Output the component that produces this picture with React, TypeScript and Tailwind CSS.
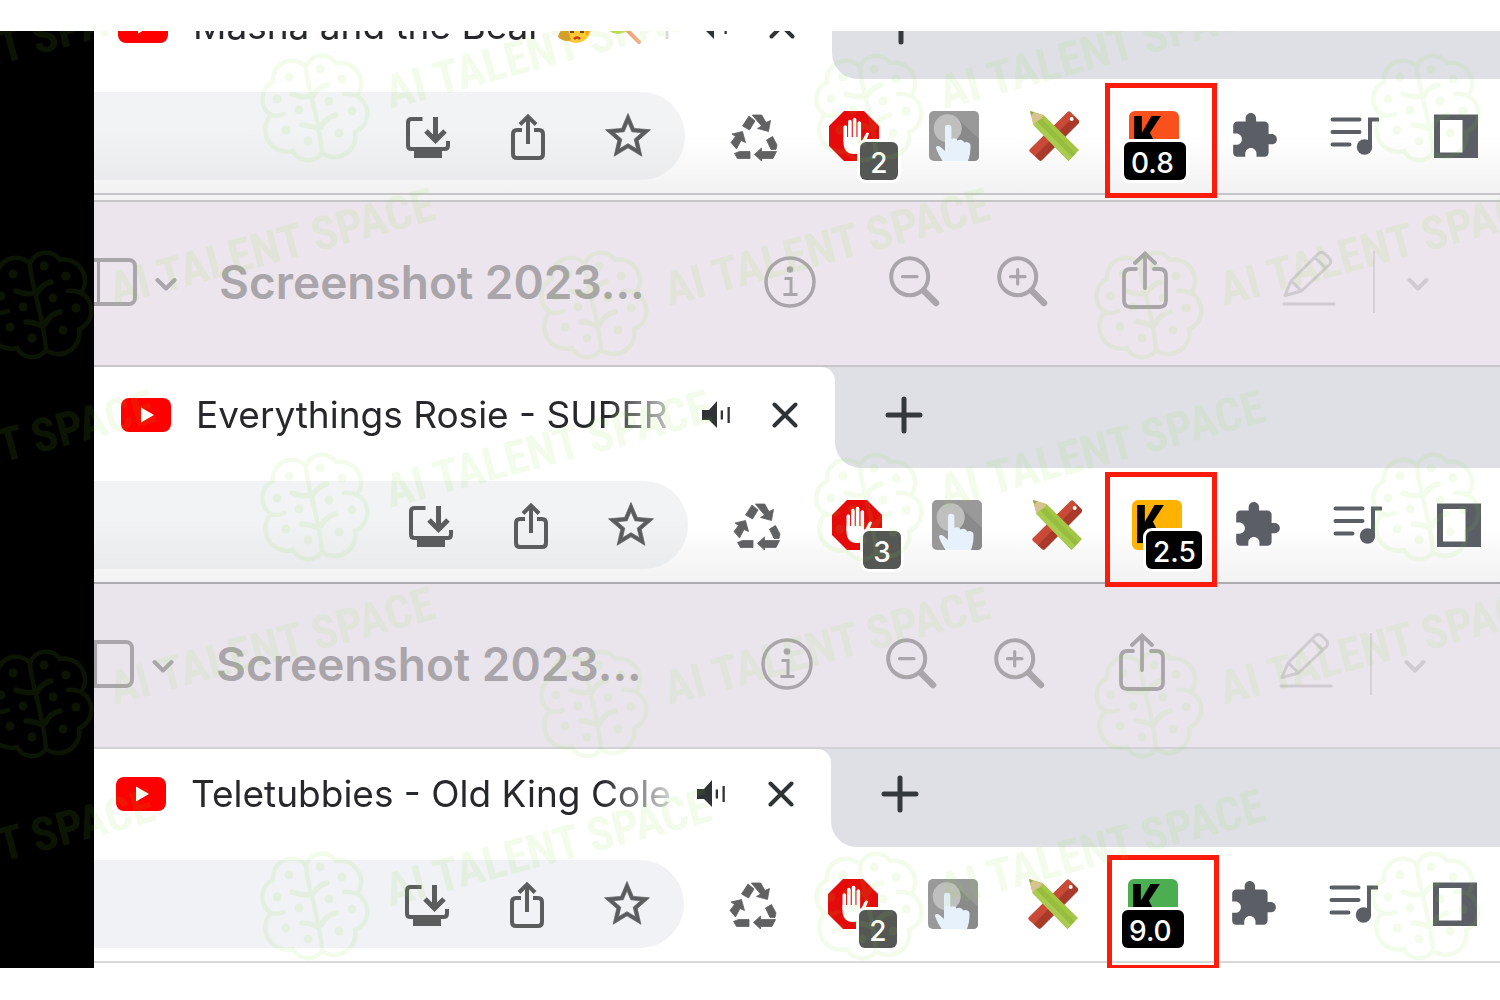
import React from "react";

type Tone = "light" | "plain";

interface BrowserRow {
  title: string;
  emoji?: boolean;
  strip: string;
  tab: string;
  tail: string;
  tone: Tone;
  blocked: string;
  score: string;
  color: string;
  scoreBadge: string;
  frame: string;
  corner: string;
}

const rows: BrowserRow[] = [
  {
    title: "Masha and the Bear",
    emoji: true,
    strip: "h-[48px]",
    tab: "w-[738px] pl-6",
    tail: "pr-[21px]",
    tone: "light",
    blocked: "2",
    score: "0.8",
    color: "bg-[#f9501c]",
    scoreBadge: "-left-[5px] w-[62px] pl-[7px]",
    frame: "-left-6 -top-7",
    corner: "",
  },
  {
    title: "Everythings Rosie - SUPER",
    strip: "h-[101px]",
    tab: "w-[741px] pl-[27px]",
    tail: "pr-[18px]",
    tone: "light",
    blocked: "3",
    score: "2.5",
    color: "bg-[#ffb300]",
    scoreBadge: "left-[14px] w-[56px] pl-[7px]",
    frame: "-left-[27px] -top-7",
    corner: "rounded-tr-[14px]",
  },
  {
    title: "Teletubbies - Old King Cole",
    strip: "h-[98px]",
    tab: "w-[737px] pl-[22px]",
    tail: "pr-[22px]",
    tone: "plain",
    blocked: "2",
    score: "9.0",
    color: "bg-[#4bae50]",
    scoreBadge: "-left-[6px] w-[62px] pl-[7px]",
    frame: "-left-[21px] -top-6",
    corner: "rounded-tr-[14px]",
  },
];

function IconButton({ label, children }: { label: string; children: React.ReactNode }) {
  return (
    <button aria-label={label} className="relative flex size-[50px] shrink-0 items-center justify-center">
      {children}
    </button>
  );
}

function YouTube() {
  return (
    <svg viewBox="0 0 50 34" className="h-[34px] w-[50px] shrink-0" aria-hidden="true">
      <rect width="50" height="34" rx="8" fill="#fe0000" />
      <path d="M20 9.5v15L33 17z" fill="#fff" />
    </svg>
  );
}

function Speaker() {
  return (
    <svg viewBox="0 0 30 28" className="h-7 w-[30px]" fill="#2f3336" aria-hidden="true">
      <path d="M0 9h7l8-9v27l-8-8H0z" />
      <path d="M18.7 9.500h2.300v9h-2.300zM25.500 6h2.300v16h-2.300z" />
    </svg>
  );
}

function Cross() {
  return (
    <svg viewBox="0 0 26 26" className="size-[26px]" stroke="#2f3336" strokeWidth="4" strokeLinecap="round" aria-hidden="true">
      <path d="M2.500 2.500l21 21M23.500 2.500l-21 21" />
    </svg>
  );
}

function Plus() {
  return (
    <svg viewBox="0 0 38 38" className="size-[38px]" stroke="#35393e" strokeWidth="5" strokeLinecap="round" aria-hidden="true">
      <path d="M19 3v32M3 19h32" />
    </svg>
  );
}

function TitleEmoji() {
  return (
    <svg viewBox="0 0 116 40" className="ml-3 h-10 w-[116px] shrink-0" aria-hidden="true">
      <circle cx="22" cy="22" r="15" fill="#ffc933" />
      <path d="M34 10q5 10-1 20l-4-8z" fill="#eea81f" />
      <path d="M4 31q2-8 9-11l4 14q-6 3-13-3z" fill="#d99a2b" />
      <path d="M16 26h4M26 26h4" stroke="#6b4a10" strokeWidth="2" />
      <path d="M20 33q3-3 6 0" stroke="#c43b1d" strokeWidth="2.500" fill="none" />
      <path d="M70 21l15 15" stroke="#ea7d41" strokeWidth="4" strokeLinecap="round" />
      <circle cx="64" cy="14" r="14" fill="#b9d43a" />
      <circle cx="65" cy="13" r="11" fill="#e6e23c" />
      <path d="M113 6v27" stroke="#777" strokeWidth="3" />
    </svg>
  );
}

function Install() {
  return (
    <svg viewBox="0 0 50 50" className="size-[50px]" fill="none" stroke="#5a5c5e" aria-hidden="true">
      <path d="M19.500 8H8.500Q5 8 5 11.500v23Q5 38 8.500 38h33q3.500 0 3.500-3.500V30" strokeWidth="4" />
      <path d="M11 38h28v9H11z" fill="#5a5c5e" stroke="none" />
      <path d="M32.500 6v21M23 20l9.500 9.500L42 20" strokeWidth="5" />
    </svg>
  );
}

function Share() {
  return (
    <svg viewBox="0 0 50 50" className="size-[50px]" fill="none" stroke="#5a5c5e" strokeWidth="4" aria-hidden="true">
      <path d="M19 19h-5q-4 0-4 4v20q0 4 4 4h22q4 0 4-4V23q0-4-4-4h-5" />
      <path d="M25 6v27M17 13.500L25 5.500l8 8" />
    </svg>
  );
}

function Star() {
  return (
    <svg viewBox="0 0 24 24" className="size-[54px] shrink-0" fill="#5a5c5e" stroke="#5a5c5e" strokeWidth="0.300" aria-hidden="true">
      <path d="M22 9.24l-7.190-.62L12 2 9.190 8.630 2 9.240l5.460 4.730L5.820 21 12 17.270 18.180 21l-1.630-7.030L22 9.240zM12 15.400l-3.760 2.270 1-4.280-3.320-2.880 4.380-.38L12 6.100l1.710 4.040 4.380.38-3.320 2.880 1 4.280L12 15.400z" />
    </svg>
  );
}

function Recycle() {
  return (
    <svg viewBox="0 0 50 50" className="size-[50px]" fill="#5f6163" stroke="#5f6163" strokeWidth="0.800" aria-hidden="true">
      <path d="M20 5l6 5-5.500 9-7-4zM23.300 4h9.400l4.300 7.500 4.500-2-2 11-11-3 4-2.500zM3 23l10.500-2.500 3 11-4.500-2L7.500 38 2 31.500l4.500-6zM10.500 40.500H21v7H8.500L5.500 42.500zM25.500 43.500L32.500 37v3.500h15L44 47.500H32.500V50zM37.500 29l6-3.500L48 34l-1 4.500h-5z" />
    </svg>
  );
}

function StopHand() {
  return (
    <svg viewBox="0 0 50 50" className="size-[50px]" aria-hidden="true">
      <path d="M15 0h20l15 15v20L35 50H15L0 35V15z" fill="#e50b0b" />
      <g stroke="#fff" strokeWidth="3.600" strokeLinecap="round">
        <path d="M16.300 16v14M20.900 10.500V30M25.600 8.500V30M30.300 12v18" />
      </g>
      <path d="M14.500 26H32v6l4.500-9q2-2.500 3.500-.500L34.500 37q-3 6-9.500 6-10.500 0-10.500-12z" fill="#fff" />
    </svg>
  );
}

function Touch() {
  return (
    <svg viewBox="0 0 50 50" className="size-[50px]" aria-hidden="true">
      <rect width="50" height="50" rx="5" fill="#999" />
      <path d="M28.500 7.500L50 28v17q0 5-5 5H20z" fill="#8a8a8a" />
      <circle cx="18.700" cy="17.300" r="14" fill="#bfbfbd" />
      <path d="M16 17a3.200 3.200 0 0 1 6.400 0v11c2-1.500 5.600-1 6.100 1.500 2.500-1.500 6-.5 6.500 2 2.500-1.500 6.500 0 6.500 3 0 6-.5 10-2.500 15.500H13.500c-2-4-5-8-6.500-13 0-2.500 2.500-2.500 4.500-1l4.500 4z" fill="#e7f1fc" />
    </svg>
  );
}

function RulerPencil() {
  return (
    <svg viewBox="0 0 50 50" className="size-[50px]" aria-hidden="true">
      <path d="M38.500 1q1.500-1.500 3 0l8 8q1.500 1.500 0 3L13 49q-1.500 1.500-3 0L1 41q-1.500-1.500 0-3z" fill="#c94a36" />
      <path d="M45 5l4.500 4.500q1.500 1.500 0 3L13 49q-1.500 1.500-3 0l-4-4z" fill="#a93a2a" />
      <circle cx="42.700" cy="8" r="2" fill="#fff" />
      <path d="M1 0l13.500 4L50 39 39.500 50 4.500 14z" fill="#a3c644" />
      <path d="M8 10.500l4-3.500L46.500 42.500 43 46z" fill="#97bd3e" />
      <path d="M4.500 14L8 10.500 43 46l-3.500 4z" fill="#a9cb50" />
      <path d="M1 0l13.500 4.500-3 4L8 10l-3.500 4z" fill="#d8c292" />
      <path d="M1 0l4 1.500L2.300 4.500z" fill="#8fae45" />
    </svg>
  );
}

function Puzzle() {
  return (
    <svg viewBox="0 0 24 24" className="size-[50px]" fill="#5b5f65" aria-hidden="true">
      <path d="M20.500 11H19V7c0-1.100-.9-2-2-2h-4V3.500C13 2.120 11.880 1 10.500 1S8 2.120 8 3.500V5H4c-1.100 0-1.990.9-1.990 2v3.800H3.500c1.490 0 2.700 1.210 2.700 2.700s-1.210 2.700-2.700 2.700H2V20c0 1.100.9 2 2 2h3.800v-1.500c0-1.490 1.210-2.700 2.700-2.700 1.490 0 2.700 1.210 2.700 2.700V22H17c1.100 0 2-.9 2-2v-4h1.500c1.380 0 2.500-1.120 2.500-2.500S21.880 11 20.500 11z" />
    </svg>
  );
}

function Queue() {
  return (
    <svg viewBox="0 0 50 50" className="size-[50px]" fill="none" stroke="#5b5f65" strokeWidth="4" strokeLinecap="round" aria-hidden="true">
      <path d="M3.500 8.500h27M3.500 21h27M3.500 33.500h17" />
      <path d="M41 36V8.500h8" />
      <circle cx="35.500" cy="36" r="7.700" fill="#5b5f65" stroke="none" />
    </svg>
  );
}

function SidePanel() {
  return (
    <svg viewBox="0 0 50 50" className="size-[50px]" aria-hidden="true">
      <path d="M5 3.500h44v43.500H5z" fill="#5b5f65" />
      <path d="M11 9h22.500v32.500H11z" fill="#fff" />
    </svg>
  );
}

function TabStrip({ row }: { row: BrowserRow }) {
  return (
    <div className={"flex items-end overflow-hidden bg-[#dee0e5] " + row.strip}>
      <div className={"flex h-full shrink-0 items-end bg-white " + row.tab + " " + row.corner}>
        <div className="flex h-[106px] flex-1 items-center pr-[37px]">
          <YouTube />
          <div className="ml-[25px] flex w-[478px] items-center overflow-hidden whitespace-nowrap font-['Inter'] text-[37px] leading-[48px] text-[#26282b] [mask-image:linear-gradient(to_right,black_86%,transparent_104%)]">
            <span>{row.title}</span>
            {row.emoji && <TitleEmoji />}
          </div>
          <button aria-label="Mute tab" className="ml-7">
            <Speaker />
          </button>
          <button aria-label="Close tab" className="ml-auto">
            <Cross />
          </button>
        </div>
      </div>
      <div className="h-full min-w-0 flex-1 bg-white">
        <div className="flex h-full items-end rounded-bl-[26px] bg-[#dee0e5] pl-[50px]">
          <button aria-label="New tab" className="flex h-[106px] items-center">
            <Plus />
          </button>
        </div>
      </div>
    </div>
  );
}

function Toolbar({ row }: { row: BrowserRow }) {
  const light = row.tone === "light";
  return (
    <div
      className={
        "flex items-center gap-11 py-[13px] " +
        (light ? "bg-linear-to-b from-white from-50% to-[#f2f2f2]" : "bg-white") +
        " " +
        row.tail
      }
    >
      <div
        className={
          "flex h-[88px] min-w-0 flex-1 items-center gap-[50px] rounded-r-full pr-8 " +
          (light ? "bg-linear-to-b from-[#f1f3f5] from-40% to-[#e9ebed]" : "bg-[#f0f2f5]")
        }
      >
        <input aria-label="Address" className="h-full min-w-0 flex-1 bg-transparent outline-none" />
        <IconButton label="Install app"><Install /></IconButton>
        <IconButton label="Share page"><Share /></IconButton>
        <IconButton label="Bookmark"><Star /></IconButton>
      </div>
      <div className="flex shrink-0 gap-[50px]">
        <IconButton label="Recycle"><Recycle /></IconButton>
        <IconButton label="Ad blocker">
          <StopHand />
          <span className="absolute left-[31px] top-[31px] flex size-[38px] items-center justify-center rounded-md bg-[#555755] pt-1 font-['Inter'] text-[28px] font-medium leading-8 text-white ring-[3px] ring-white">
            {row.blocked}
          </span>
        </IconButton>
        <IconButton label="Touch"><Touch /></IconButton>
        <IconButton label="Ruler and pencil"><RulerPencil /></IconButton>
        <IconButton label="Score">
          <span className={"flex size-[50px] overflow-hidden rounded-md pl-[2px] font-['Liberation_Sans_Narrow','Roboto_Condensed',sans-serif] text-[54px] font-bold leading-[50px] text-black " + row.color}>
            K
          </span>
          <span className={"absolute top-[31px] flex h-[38px] items-center rounded-md bg-black pt-1 font-['Inter'] text-[28px] font-medium leading-8 text-white ring-[3px] ring-white " + row.scoreBadge}>
            {row.score}
          </span>
          <span className={"absolute z-10 h-[115px] w-[112px] border-[5px] border-[#fd1b0b] " + row.frame} />
        </IconButton>
        <IconButton label="Extensions"><Puzzle /></IconButton>
        <IconButton label="Media"><Queue /></IconButton>
        <IconButton label="Side panel"><SidePanel /></IconButton>
      </div>
    </div>
  );
}

function Chevron() {
  return (
    <svg viewBox="0 0 22 14" className="h-[14px] w-[22px]" fill="none" stroke="currentColor" strokeWidth="4" strokeLinecap="round" strokeLinejoin="round" aria-hidden="true">
      <path d="M2.500 3l8.500 8.500L19.500 3" />
    </svg>
  );
}

function Magnifier({ plus }: { plus?: boolean }) {
  return (
    <svg viewBox="0 0 51 51" className="size-[51px]" fill="none" stroke="currentColor" strokeWidth="4" strokeLinecap="round" aria-hidden="true">
      <circle cx="20.700" cy="20.700" r="18.500" />
      <path d="M35 35l12 12" strokeWidth="6.500" />
      <path d={plus ? "M13.500 20.700h14.500M20.700 13.500V28" : "M13.500 20.700h14.500"} strokeWidth="3.200" />
    </svg>
  );
}

function PreviewBar({ side, pad, bg }: { side: string; pad: string; bg: string }) {
  return (
    <div className={"flex h-[163px] items-center pb-1 text-[#aaa5ab] " + bg + " " + pad}>
      <button aria-label="Sidebar" className={"flex shrink-0 justify-end overflow-hidden " + side}>
        <svg viewBox="0 0 64 48" className="h-12 w-16 shrink-0" fill="none" stroke="currentColor" strokeWidth="4" aria-hidden="true">
          <rect x="2" y="2" width="60" height="44" rx="6" />
          <path d="M25.500 2v44" strokeWidth="3" />
        </svg>
      </button>
      <button aria-label="Sidebar options" className="ml-[18px] mt-1">
        <Chevron />
      </button>
      <h2 className="ml-[42px] min-w-0 flex-1 truncate font-['Inter'] text-[46px] font-semibold leading-[60px]">
        Screenshot 2023...
      </h2>
      <button aria-label="Info">
        <svg viewBox="0 0 52 52" className="size-[52px]" fill="none" stroke="currentColor" strokeWidth="3.500" aria-hidden="true">
          <circle cx="26" cy="26" r="24" />
          <circle cx="26" cy="13.500" r="3.300" fill="currentColor" stroke="none" />
          <path d="M20.500 22.500H27V38M19.500 38.500h14" strokeWidth="3" />
        </svg>
      </button>
      <button aria-label="Zoom out" className="ml-[73px]">
        <Magnifier />
      </button>
      <button aria-label="Zoom in" className="ml-[57px]">
        <Magnifier plus />
      </button>
      <button aria-label="Share image" className="ml-[74px] pb-1">
        <svg viewBox="0 0 46 58" className="h-[58px] w-[46px]" fill="none" stroke="currentColor" strokeWidth="3.800" strokeLinecap="round" aria-hidden="true">
          <path d="M14 18H8.500Q2 18 2 24.500v25Q2 56 8.500 56h29q6.500 0 6.500-6.500v-25Q44 18 37.500 18H32" />
          <path d="M23 3v34M13 12L23 2.500 33 12" />
        </svg>
      </button>
      <div className="flex items-center text-[#d0cad1]">
        <button aria-label="Markup" className="ml-[114px] pb-2">
          <svg viewBox="0 0 54 56" className="h-14 w-[54px]" fill="none" stroke="currentColor" strokeWidth="3" strokeLinecap="round" strokeLinejoin="round" aria-hidden="true">
            <path d="M3 45.500L9 31 36.500 3.500q3-2.500 6 0l5 5q2.500 3 0 6L19.500 41zM9.500 31l9.500 9.500M33 7.500L43.500 18" />
            <path d="M2 54h50" />
          </svg>
        </button>
        <span className="ml-[37px] h-[62px] w-[2px] bg-[#d6d0d7]" />
        <button aria-label="Markup options" className="ml-8 mt-1">
          <Chevron />
        </button>
      </div>
    </div>
  );
}

const marks: [number, number][] = [
  [-242, 78], [314, 78], [868, 78], [1425, 78],
  [38, 275], [593, 275], [1148, 275],
  [-242, 477], [314, 477], [868, 477], [1425, 477],
  [38, 674], [593, 674], [1148, 674],
  [-242, 876], [314, 876], [868, 876], [1425, 876],
];

function Watermark() {
  return (
    <svg className="pointer-events-none absolute inset-0 z-20 h-full w-full" opacity="0.09" aria-hidden="true">
      {marks.map(([x, y]) => (
        <g key={x + "-" + y} transform={`translate(${x} ${y})`} fill="none" stroke="#84dc28" strokeWidth="4.500" strokeLinecap="round">
          <path d="M-8-42A17 17 0 0 1 22-46 21 21 0 0 1 43-13 20 20 0 0 1 41 23 21 21 0 0 1 8 44 17 17 0 0 1-21 42 22 22 0 0 1-43 6 19 19 0 0 1-41-27 19 19 0 0 1-8-42C-8-24 5 6 8 44M43-13q-7-3-13-2M-43 6q7 2 13-1" />
          <path d="M-22-15q10 4 18 2M-1-13q5-9 14-11M-12 16q8 0 16 4M7 18q5-10 15-12" strokeWidth="5.500" />
          <g fill="#84dc28" stroke="none">
            {[[6, -40], [28, -30], [15, -8], [38, 2], [25, 24], [-6, 32], [-28, 21], [-37, -10], [-15, 1], [-25, -32]].map(([cx, cy]) => (
              <circle key={cx} cx={cx} cy={cy} r="4.500" />
            ))}
            <text x="76" y="0" transform="rotate(-15 76 0)" className="font-['Liberation_Sans_Narrow','Roboto_Condensed','DejaVu_Sans_Condensed',sans-serif] text-[47px] font-bold">
              AI TALENT SPACE
            </text>
          </g>
        </g>
      ))}
    </svg>
  );
}

export default function App() {
  return (
    <div className="bg-white pb-8 pt-[31px]">
      <main className="relative flex overflow-hidden">
        <div className="w-[94px] shrink-0 bg-black" />
        <div className="min-w-0 flex-1">
          <TabStrip row={rows[0]} />
          <Toolbar row={rows[0]} />
          <div className="h-[9px] border-y-2 border-[#c6c5c7] bg-[#f3f3f3]" />
          <PreviewBar bg="bg-[#ece5ed]" side="w-[43px]" pad="pr-[71px]" />
          <div className="h-[2px] bg-[#c8c6cb]" />
          <TabStrip row={rows[1]} />
          <Toolbar row={rows[1]} />
          <div className="h-[2px] bg-[#acabad]" />
          <PreviewBar bg="bg-[#eae5ed]" side="w-10" pad="pr-[74px]" />
          <div className="h-[2px] bg-[#d2d1d6]" />
          <TabStrip row={rows[2]} />
          <Toolbar row={rows[2]} />
          <div className="h-[7px] border-t-2 border-[#d6d8da] bg-white" />
        </div>
        <Watermark />
      </main>
    </div>
  );
}
